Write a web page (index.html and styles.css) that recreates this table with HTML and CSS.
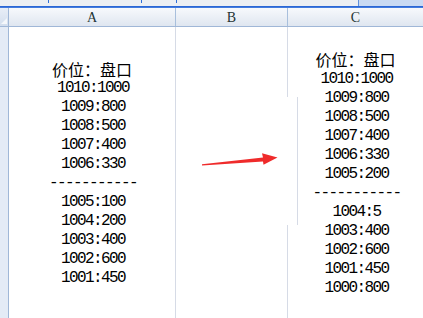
FILE: index.html
```html
<!DOCTYPE html>
<html>
<head>
<meta charset="utf-8">
<link rel="stylesheet" href="styles.css">
</head>
<body>
<div class="sheet">
  <div class="topbar">
    <span class="tick t1"></span><span class="tick t2"></span><span class="tick t3"></span>
    <div class="topbar-right"></div>
  </div>
  <div class="blueline"></div>
  <div class="header-row">
    <div class="corner"><span class="tri"></span></div>
    <div class="colhead">A</div>
    <div class="colhead">B</div>
    <div class="colhead last">C</div>
  </div>
  <div class="body-row">
    <div class="rowhead"></div>
    <div class="cell">
      <div class="stack stack-a">
        <div class="title">价位：盘口</div>
        <div class="num">1010:1000</div>
        <div class="num">1009:800</div>
        <div class="num">1008:500</div>
        <div class="num">1007:400</div>
        <div class="num">1006:330</div>
        <div class="num">-----------</div>
        <div class="num">1005:100</div>
        <div class="num">1004:200</div>
        <div class="num">1003:400</div>
        <div class="num">1002:600</div>
        <div class="num">1001:450</div>
      </div>
    </div>
    <div class="cell"></div>
    <div class="cell last">
      <div class="stack stack-c">
        <div class="title">价位：盘口</div>
        <div class="num">1010:1000</div>
        <div class="num">1009:800</div>
        <div class="num">1008:500</div>
        <div class="num">1007:400</div>
        <div class="num">1006:330</div>
        <div class="num">1005:200</div>
        <div class="num">-----------</div>
        <div class="num">1004:5</div>
        <div class="num">1003:400</div>
        <div class="num">1002:600</div>
        <div class="num">1001:450</div>
        <div class="num">1000:800</div>
      </div>
    </div>
  </div>
  <div class="textbox-edge"></div>
  <svg class="arrow" width="423" height="318" viewBox="0 0 423 318">
    <polygon points="202,164.2 263,157.6 262,153.3 277.5,157.6 263.5,164.8 263,161.6 202,165.4" fill="#ef2b2b"/>
  </svg>
</div>
</body>
</html>
```

FILE: styles.css
```css
html, body {
  margin: 0;
  padding: 0;
  background: #ffffff;
}

.sheet {
  position: relative;
  width: 423px;
  height: 318px;
  overflow: hidden;
  display: flex;
  flex-direction: column;
}

.topbar {
  position: relative;
  height: 6px;
  background: #eceff3;
  display: flex;
  justify-content: flex-end;
}

.topbar-right {
  width: 64px;
  height: 6px;
  background: #c9daf3;
  border-left: 1px solid #5d8fdc;
}

.tick {
  position: absolute;
  top: 0;
  width: 1px;
  height: 3px;
  background: #2f6fd8;
}
.t1 { left: 48px; }
.t2 { left: 141px; }
.t3 { left: 176px; }

.blueline {
  height: 2px;
  background: linear-gradient(#1f5cd0, #4f86e2);
}

.header-row {
  display: grid;
  grid-template-columns: 9px 167px 112px 1fr;
  height: 19px;
  box-sizing: border-box;
  border-bottom: 1px solid #a0b7d7;
  background: linear-gradient(#f7f9fc, #dfe6f0);
}

.corner {
  position: relative;
  border-right: 1px solid #a0b7d7;
  background: linear-gradient(#e8eef7, #d3deee);
}
.tri {
  position: absolute;
  right: 1px;
  bottom: 2px;
  width: 0;
  height: 0;
  border-left: 6px solid transparent;
  border-bottom: 6px solid #f4f7fb;
}

.colhead {
  border-right: 1px solid #a8bfdc;
  display: flex;
  align-items: center;
  justify-content: center;
  font-family: "Liberation Serif", serif;
  font-size: 14px;
  color: #1e3434;
  padding-top: 1px;
}
.colhead.last { border-right: none; }

.body-row {
  flex: 1;
  display: grid;
  grid-template-columns: 9px 167px 112px 1fr;
}

.rowhead {
  background: #e4ebf6;
  border-right: 1px solid #a0b7d7;
}

.cell {
  border-right: 1px solid #d6dbe6;
}
.cell.last { border-right: none; }

.stack {
  display: flex;
  flex-direction: column;
  align-items: center;
  color: #000;
}
.stack-a { padding-top: 34px; }
.stack-c { padding-top: 24px; }

.title {
  font-family: "Noto Sans CJK SC", sans-serif;
  font-size: 16px;
  line-height: 16px;
  height: 16px;
  margin-bottom: 3px;
}
.stack-a .title { margin-bottom: 2px; }

.num {
  font-family: "Liberation Mono", monospace;
  font-size: 16px;
  letter-spacing: -1.6px;
  line-height: 19px;
  height: 19px;
  padding-left: 2px;
  white-space: pre;
}

.textbox-edge {
  position: absolute;
  left: 286px;
  top: 97px;
  width: 11px;
  height: 128px;
  background: #ffffff;
  border-right: 1px solid #d6dbe6;
}

.arrow {
  position: absolute;
  left: 0;
  top: 0;
}
```
